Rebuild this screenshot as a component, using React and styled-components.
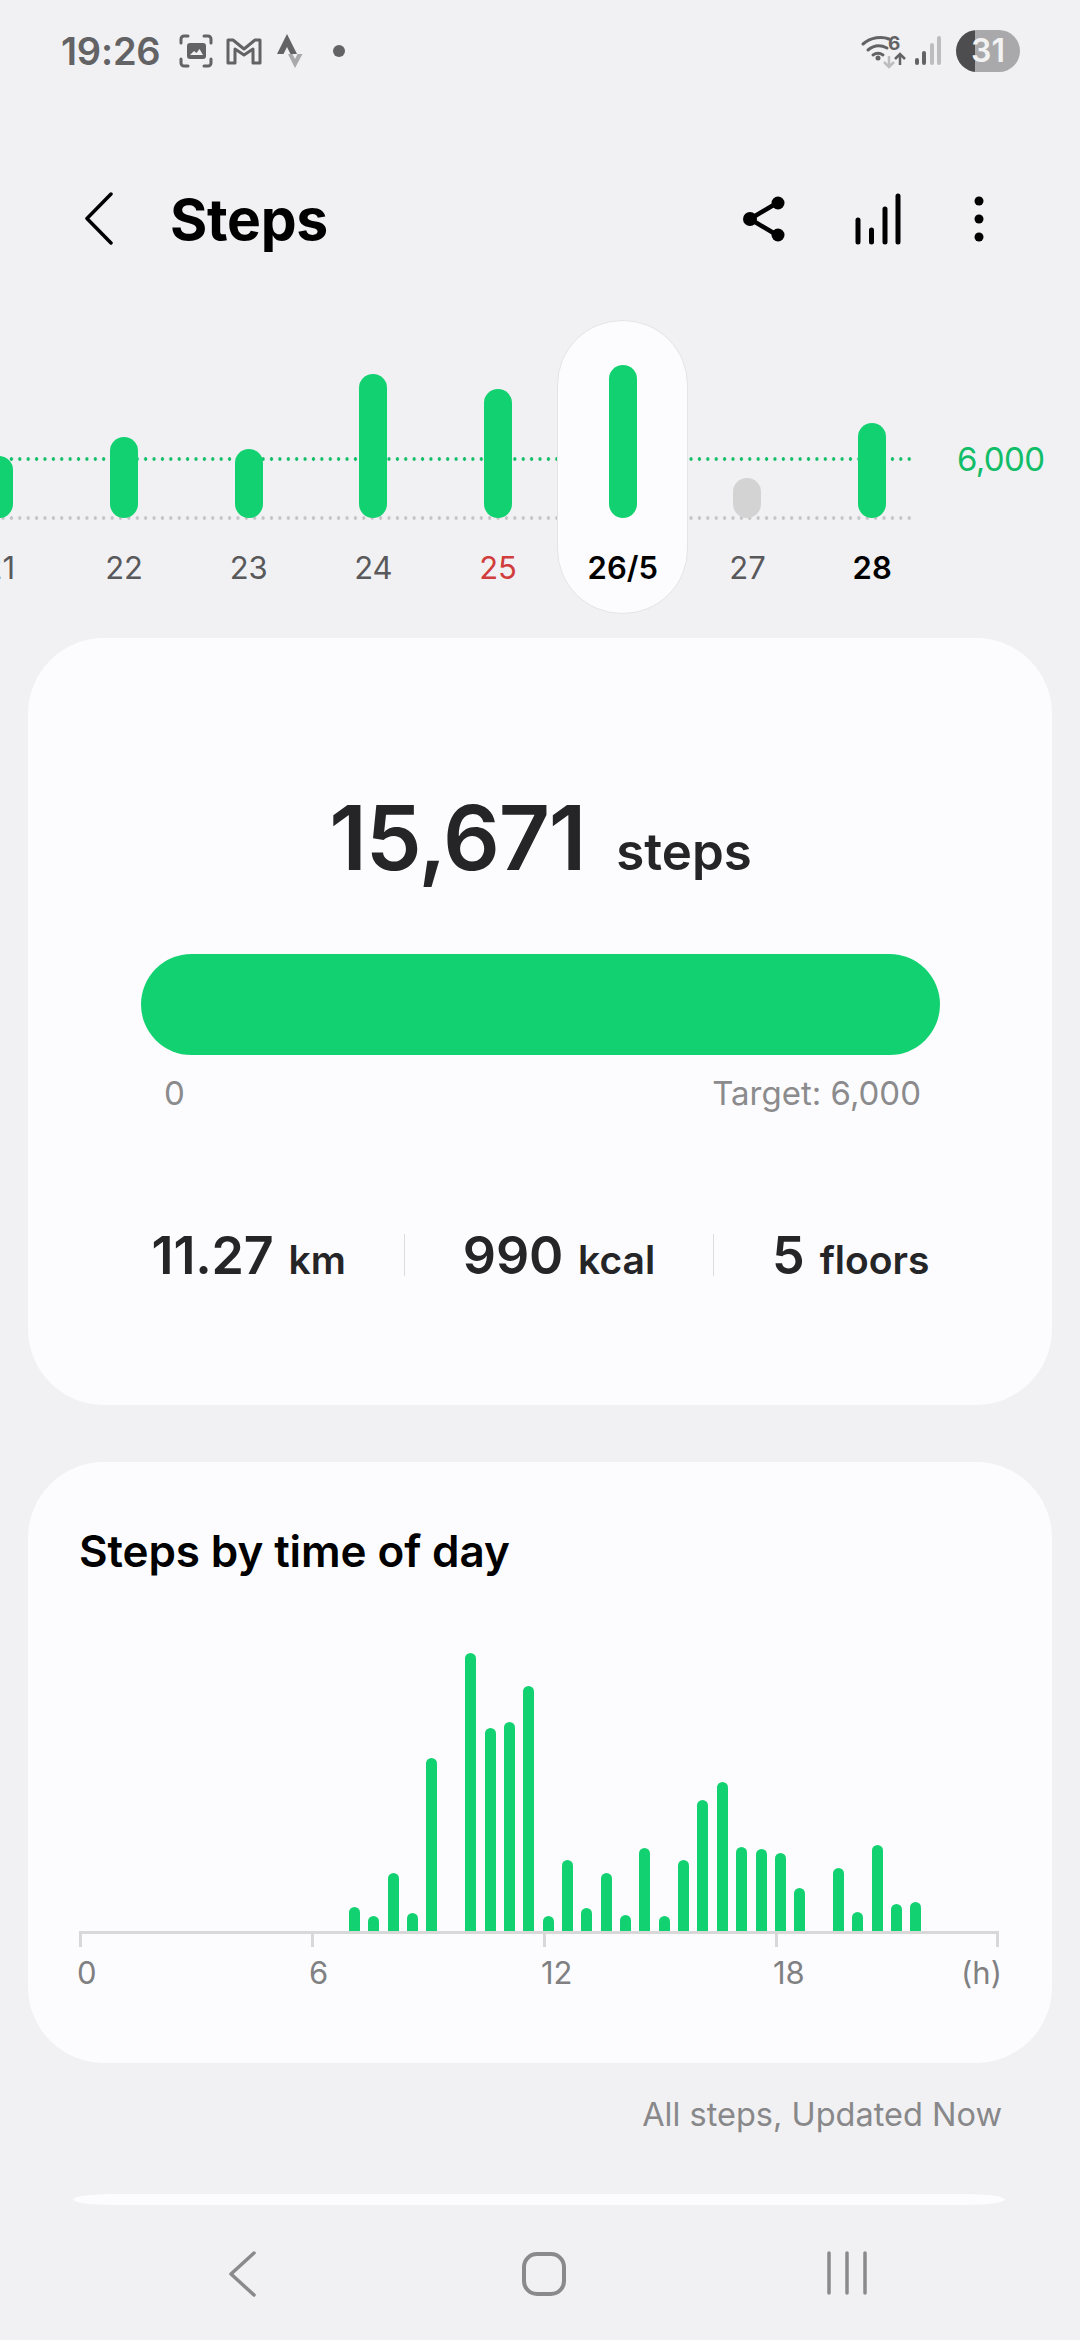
import React from 'react';
import styled, { createGlobalStyle } from 'styled-components';

const GREEN = '#12d170';

const GlobalStyle = createGlobalStyle`
  html, body {
    margin: 0;
    padding: 0;
    background: #f1f1f3;
  }
  body {
    font-family: Inter, "Noto Sans", sans-serif;
  }
`;

const Page = styled.div`
  width: 1080px;
  height: 2340px;
  overflow: hidden;
  background: #f1f1f3;
  display: flex;
  flex-direction: column;
`;

// ****** status bar ****** //
const StatusBar = styled.div`
  height: 102px;
  padding: 0 60px 0 61px;
  display: flex;
  align-items: center;
  flex-shrink: 0;
`;

const Clock = styled.span`
  font-size: 38px;
  font-weight: 600;
  color: #636365;
  letter-spacing: -0.2px;
  margin-right: 19px;
`;

const Notices = styled.div`
  display: flex;
  align-items: center;
  gap: 13px;
`;

const NoticeDot = styled.i`
  width: 12px;
  height: 12px;
  border-radius: 50%;
  background: #636365;
  margin-left: 16px;
`;

const StatusRight = styled.div`
  margin-left: auto;
  display: flex;
  align-items: center;
  gap: 6px;
`;

const Battery = styled.div`
  width: 64px;
  height: 42px;
  margin-left: 6px;
  border-radius: 21px;
  background: linear-gradient(90deg, #4d4d4f 30%, #a9a9ab 30%);
  color: #f2f2f2;
  font-size: 32px;
  font-weight: 600;
  line-height: 42px;
  text-align: center;
`;

// ****** header ****** //
const Header = styled.header`
  height: 100px;
  margin-top: 67px;
  padding: 0 96px 0 85px;
  display: flex;
  align-items: center;
  flex-shrink: 0;
`;

const Title = styled.h1`
  margin: 0 0 0 57px;
  font-size: 57px;
  font-weight: 700;
  color: #000;
  letter-spacing: -0.3px;
`;

const Actions = styled.div`
  margin-left: auto;
  display: flex;
  align-items: center;
  gap: 70px;
`;

const MoreSlot = styled.div`
  display: flex;
  margin-left: 3px;
`;

// ****** week chart ****** //
const Week = styled.section`
  position: relative;
  height: 294px;
  margin-top: 51px;
  flex-shrink: 0;
  overflow: hidden;
`;

const Guide = styled.div`
  position: absolute;
  left: 0;
  top: ${(p) => p.$top}px;
  display: flex;
  align-items: center;
  height: 4px;
`;

const Dots = styled.div`
  width: 913px;
  height: 4px;
  background-image: radial-gradient(circle, ${(p) => p.$color} 1.5px, transparent 2px);
  background-size: 8.4px 4px;
  background-position: -1.2px 0;
`;

const GoalLabel = styled.span`
  margin-left: 44px;
  font-size: 33px;
  color: #12bd68;
  letter-spacing: -0.6px;
  white-space: nowrap;
`;

const Days = styled.div`
  display: flex;
  margin-left: -63px;
`;

const Day = styled.div`
  position: relative;
  z-index: 1;
  width: 124.7px;
  height: 294px;
  flex-shrink: 0;
  display: flex;
  flex-direction: column;
  align-items: center;

  ${(p) =>
    p.$selected &&
    `
    &::before {
      content: '';
      position: absolute;
      z-index: -1;
      top: 0;
      bottom: 0;
      left: -3px;
      right: -3px;
      box-sizing: border-box;
      border: 1.5px solid #e4e4e6;
      border-radius: 65px;
      background: #fcfcfe;
    }
  `}
`;

const BarSlot = styled.div`
  height: 198px;
  display: flex;
  align-items: flex-end;
`;

const DayBar = styled.div`
  width: 28px;
  height: ${(p) => p.$height}px;
  border-radius: 14px;
  background: ${(p) => (p.$muted ? '#d3d3d3' : GREEN)};
`;

const DayLabel = styled.span`
  margin-top: 30px;
  font-size: 31px;
  line-height: 40px;
  font-weight: ${(p) => (p.$strong ? 600 : 400)};
  color: ${(p) => (p.$strong ? '#000' : p.$red ? '#d13c3c' : '#59595b')};
  white-space: nowrap;
`;

// ****** cards ****** //
const Card = styled.section`
  box-sizing: border-box;
  width: 1024px;
  height: ${(p) => p.$height}px;
  margin: ${(p) => p.$top}px 28px 0;
  flex-shrink: 0;
  border-radius: 76px;
  background: #fcfcfe;
  color: #252527;
`;

const SummaryCard = styled(Card)`
  padding: 150px 112px 0 113px;
`;

const Total = styled.div`
  display: flex;
  justify-content: center;
  align-items: baseline;
  gap: 31px;
  line-height: 100px;
  height: 100px;
`;

const TotalValue = styled.span`
  font-size: 89px;
  font-weight: 600;
  letter-spacing: -1.2px;
`;

const TotalUnit = styled.span`
  font-size: 51px;
  font-weight: 600;
`;

const Progress = styled.div`
  height: 101px;
  margin-top: 66px;
  border-radius: 51px;
  background: ${GREEN};
`;

const Scale = styled.div`
  display: flex;
  justify-content: space-between;
  margin-top: 18px;
  padding: 0 19px 0 23px;
  font-size: 33px;
  line-height: 40px;
  color: #8b8b8d;
`;

const Stats = styled.div`
  display: flex;
  justify-content: center;
  align-items: flex-start;
  gap: 58px;
  margin-top: 113px;
`;

const Stat = styled.div`
  display: flex;
  align-items: baseline;
  gap: 15px;
  line-height: 60px;
  white-space: nowrap;
`;

const StatValue = styled.span`
  font-size: 52px;
  font-weight: 600;
  letter-spacing: -0.2px;
`;

const StatUnit = styled.span`
  font-size: 39px;
  font-weight: 600;
`;

const StatDivider = styled.i`
  width: 1px;
  height: 42px;
  margin-top: 8px;
  background: #dcdcde;
`;

const ChartCard = styled(Card)`
  padding: 65px 53px 0 51px;
`;

const ChartTitle = styled.h2`
  margin: 0;
  font-size: 44px;
  font-weight: 600;
  line-height: 48px;
  letter-spacing: -0.1px;
  color: #000;
`;

const Plot = styled.div`
  height: 289px;
  margin-top: 67px;
  padding-left: 270px;
  display: flex;
  align-items: flex-end;
  gap: 8.37px;
`;

const HourBar = styled.div`
  width: 11px;
  height: ${(p) => p.$height}px;
  border-radius: 6px 6px 0 0;
  background: ${GREEN};
`;

const AxisGrid = styled.div`
  display: grid;
  grid-template-columns: repeat(3, 232px) 1fr;
`;

const Axis = styled(AxisGrid)`
  height: 13px;
  border-top: 3px solid #d8d8d8;
`;

const Tick = styled.i`
  width: 3px;
  height: 13px;
  background: #d8d8d8;
`;

const TickPair = styled.div`
  display: flex;
  justify-content: space-between;
`;

const AxisLabels = styled(AxisGrid)`
  margin: 6px 0 0 -2px;
  font-size: 31px;
  line-height: 40px;
  color: #808082;
`;

const HourUnit = styled.div`
  text-align: right;
  margin-right: -3px;
`;

const Note = styled.div`
  margin-top: 32px;
  padding-right: 78px;
  flex-shrink: 0;
  text-align: right;
  font-size: 32.5px;
  line-height: 40px;
  color: #88888a;
`;

const NextCard = styled.div`
  width: 932px;
  height: 11px;
  margin: 59px 0 0 73px;
  flex-shrink: 0;
  border-radius: 40px / 5.5px;
  background: #fcfcfe;
`;

// ****** nav bar ****** //
const NavBar = styled.nav`
  margin-top: 46px;
  padding-left: 8px;
  display: flex;
  justify-content: center;
`;

const NavSlot = styled.div`
  width: 302.5px;
  display: flex;
  justify-content: center;
`;

// ****** icons ****** //
const GalleryIcon = () => (
  <svg width="34" height="34" viewBox="0 0 34 34" fill="none">
    <path
      d="M2 9V5a3 3 0 0 1 3-3h4M25 2h4a3 3 0 0 1 3 3v4M32 25v4a3 3 0 0 1-3 3h-4M9 32H5a3 3 0 0 1-3-3v-4"
      stroke="#636365"
      strokeWidth="3"
      strokeLinecap="round"
    />
    <rect x="8" y="9" width="19" height="16" rx="3" fill="#636365" />
    <path d="M11 21l4-4 2.5 2 3-4 3.5 6z" fill="#f1f1f3" />
  </svg>
);

const MailIcon = () => (
  <svg width="36" height="28" viewBox="0 0 36 28" fill="none">
    <path
      d="M2 3h5l11 9 11-9h5v23h-7V12l-9 6-9-6v14H2z"
      stroke="#636365"
      strokeWidth="3"
      strokeLinejoin="round"
    />
  </svg>
);

const RouteIcon = () => (
  <svg width="29" height="36" viewBox="0 0 29 36">
    <path d="M12 1L2 21h6.5L12 14l3.5 7H22z" fill="#636365" />
    <path d="M13 21l7 14 7.5-14h-5l-2.500 5-2.500-5z" fill="#a9a9ab" />
  </svg>
);

const WifiIcon = () => (
  <svg width="48" height="36" viewBox="0 0 48 36" fill="none">
    <g stroke="#636365" strokeWidth="3" strokeLinecap="round">
      <path d="M3 11c8-7 19-8 26-5" />
      <path d="M8 17c6-5 13-5 19-2" />
      <path d="M13 22c3-2 7-2 10 0" />
    </g>
    <circle cx="18" cy="25" r="2.500" fill="#636365" />
    <text x="28" y="17" fontFamily="Inter" fontSize="19" fontWeight="700" fill="#636365">
      6
    </text>
    <path d="M29 23v10m-5-4l5 5 5-5" stroke="#bdbdbf" strokeWidth="2.500" />
    <path d="M40 32V21m-5 5l5-5 5 5" stroke="#636365" strokeWidth="2.500" />
  </svg>
);

const SignalIcon = () => (
  <svg width="30" height="30" viewBox="0 0 30 30" fill="none" strokeWidth="4" strokeLinecap="round">
    <path d="M3 24v3M10 17v10" stroke="#636365" />
    <path d="M18 9v18M25 2v25" stroke="#bdbdbf" />
  </svg>
);

const BackIcon = () => (
  <svg width="28" height="54" viewBox="0 0 28 54" fill="none">
    <path d="M26 2L2 26.500 26 51" stroke="#000" strokeWidth="3.500" strokeLinecap="round" strokeLinejoin="round" />
  </svg>
);

const ShareIcon = () => (
  <svg width="42" height="46" viewBox="0 0 42 46">
    <path d="M34 7L7 23l27 16" fill="none" stroke="#000" strokeWidth="4.500" />
    <circle cx="35" cy="7" r="6.500" />
    <circle cx="7" cy="23" r="7" />
    <circle cx="35" cy="39" r="6.500" />
  </svg>
);

const BarsIcon = () => (
  <svg width="46" height="52" viewBox="0 0 46 52" fill="none" stroke="#000" strokeWidth="5" strokeLinecap="round">
    <path d="M3 27v22M16.500 37v12M30 16v33M43 3v46" />
  </svg>
);

const MoreIcon = () => (
  <svg width="10" height="46" viewBox="0 0 10 46">
    <circle cx="5" cy="5" r="4.500" />
    <circle cx="5" cy="23" r="4.500" />
    <circle cx="5" cy="41" r="4.500" />
  </svg>
);

const NavBack = () => (
  <svg width="28" height="46" viewBox="0 0 28 46" fill="none">
    <path d="M26 2L3 23l23 21" stroke="#8a8a8c" strokeWidth="3.500" strokeLinecap="round" strokeLinejoin="round" />
  </svg>
);

const NavHome = () => (
  <svg width="46" height="46" viewBox="0 0 46 46" fill="none">
    <rect x="3" y="3" width="40" height="40" rx="13" stroke="#8a8a8c" strokeWidth="4" />
  </svg>
);

const NavRecents = () => (
  <svg width="42" height="44" viewBox="0 0 42 44" fill="none" stroke="#8a8a8c" strokeWidth="3.500" strokeLinecap="round">
    <path d="M3 2v40M21 2v40M39 2v40" />
  </svg>
);

// ****** data ****** //
const days = [
  { label: '21', height: 62 },
  { label: '22', height: 81 },
  { label: '23', height: 69 },
  { label: '24', height: 144 },
  { label: '25', height: 129, red: true },
  { label: '26/5', height: 153, selected: true },
  { label: '27', height: 40, muted: true },
  { label: '28', height: 95, strong: true },
];

// half-hour buckets starting at 7:00, 0 means no bar
const hours = [
  24, 15, 58, 18, 173, 0, 278, 203, 209, 245, 15, 71, 23, 58, 16, 83, 15, 71, 131, 149, 84, 82, 78, 43, 0,
  63, 19, 86, 27, 29,
];

const stats = [
  { value: '11.27', unit: 'km' },
  { value: '990', unit: 'kcal' },
  { value: '5', unit: 'floors' },
];

const App = () => {
  return (
    <Page>
      <GlobalStyle />
      <StatusBar>
        <Clock>19:26</Clock>
        <Notices>
          <GalleryIcon />
          <MailIcon />
          <RouteIcon />
          <NoticeDot />
        </Notices>
        <StatusRight>
          <WifiIcon />
          <SignalIcon />
          <Battery>31</Battery>
        </StatusRight>
      </StatusBar>

      <Header>
        <BackIcon />
        <Title>Steps</Title>
        <Actions>
          <ShareIcon />
          <BarsIcon />
          <MoreSlot>
            <MoreIcon />
          </MoreSlot>
        </Actions>
      </Header>

      <Week>
        <Guide $top={137}>
          <Dots $color="#12bd68" />
          <GoalLabel>6,000</GoalLabel>
        </Guide>
        <Guide $top={196}>
          <Dots $color="#c4c4c6" />
        </Guide>
        <Days>
          {days.map((day) => (
            <Day key={day.label} $selected={day.selected}>
              <BarSlot>
                <DayBar $height={day.height} $muted={day.muted} />
              </BarSlot>
              <DayLabel $strong={day.selected || day.strong} $red={day.red}>
                {day.label}
              </DayLabel>
            </Day>
          ))}
        </Days>
      </Week>

      <SummaryCard $height={767} $top={24}>
        <Total>
          <TotalValue>15,671</TotalValue>
          <TotalUnit>steps</TotalUnit>
        </Total>
        <Progress />
        <Scale>
          <span>0</span>
          <span>Target: 6,000</span>
        </Scale>
        <Stats>
          {stats.map((stat, i) => (
            <React.Fragment key={stat.unit}>
              {i > 0 && <StatDivider />}
              <Stat>
                <StatValue>{stat.value}</StatValue>
                <StatUnit>{stat.unit}</StatUnit>
              </Stat>
            </React.Fragment>
          ))}
        </Stats>
      </SummaryCard>

      <ChartCard $height={601} $top={57}>
        <ChartTitle>Steps by time of day</ChartTitle>
        <Plot>
          {hours.map((height, i) => (
            <HourBar key={i} $height={height} />
          ))}
        </Plot>
        <Axis>
          <Tick />
          <Tick />
          <Tick />
          <TickPair>
            <Tick />
            <Tick />
          </TickPair>
        </Axis>
        <AxisLabels>
          <span>0</span>
          <span>6</span>
          <span>12</span>
          <TickPair>
            <span>18</span>
            <HourUnit>(h)</HourUnit>
          </TickPair>
        </AxisLabels>
      </ChartCard>

      <Note>All steps, Updated Now</Note>
      <NextCard />

      <NavBar>
        <NavSlot>
          <NavBack />
        </NavSlot>
        <NavSlot>
          <NavHome />
        </NavSlot>
        <NavSlot>
          <NavRecents />
        </NavSlot>
      </NavBar>
    </Page>
  );
};

export default App;
